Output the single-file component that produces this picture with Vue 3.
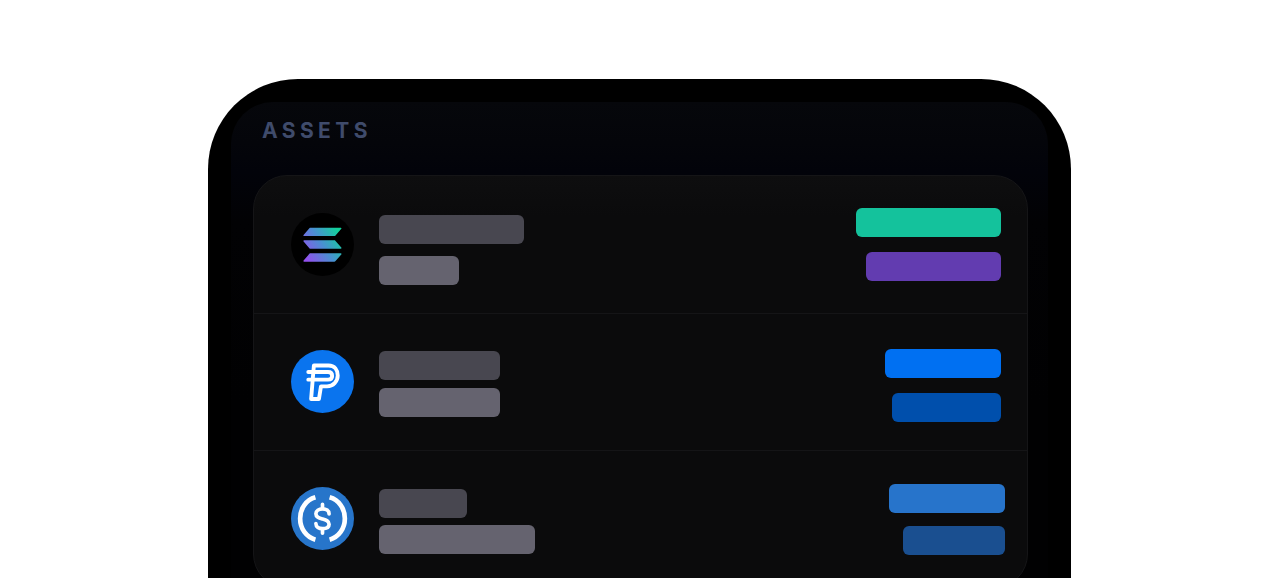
<template>
  <div class="page">
    <div class="phone">
      <section class="screen">
        <h2 class="title">ASSETS</h2>
        <ul class="card">
          <li v-for="row in rows" :key="row.id" class="row">
            <span class="icon" :style="{ marginTop: row.iconTop + 'px' }">
              <svg v-if="row.id === 'sol'" viewBox="0 0 62 62" width="63" height="63">
                <defs>
                  <linearGradient id="solGrad" gradientUnits="userSpaceOnUse" x1="380" y1="40" x2="30" y2="290">
                    <stop offset="0" stop-color="#10d39a" />
                    <stop offset="0.5" stop-color="#4a8fd2" />
                    <stop offset="1" stop-color="#9350ee" />
                  </linearGradient>
                </defs>
                <circle cx="31" cy="31" r="31" fill="#000" />
                <g transform="translate(12.200 14.400) scale(0.0943 0.1075)" fill="url(#solGrad)">
                  <path d="M64.6 237.9c2.4-2.4 5.7-3.8 9.2-3.8h317.4c5.8 0 8.7 7 4.6 11.1l-62.7 62.7c-2.4 2.4-5.7 3.8-9.2 3.8H6.5c-5.8 0-8.7-7-4.6-11.1l62.7-62.7z" />
                  <path d="M64.6 3.8C67.1 1.4 70.4 0 73.8 0h317.4c5.8 0 8.7 7 4.6 11.1l-62.7 62.7c-2.4 2.4-5.7 3.8-9.2 3.8H6.5c-5.8 0-8.7-7-4.6-11.1L64.6 3.8z" />
                  <path d="M333.1 120.1c-2.4-2.4-5.7-3.8-9.2-3.8H6.5c-5.8 0-8.7 7-4.6 11.1l62.7 62.7c2.4 2.4 5.7 3.8 9.2 3.8h317.4c5.8 0 8.7-7 4.6-11.1l-62.7-62.7z" />
                </g>
              </svg>
              <svg v-else-if="row.id === 'pyusd'" viewBox="0 0 62 62" width="63" height="63">
                <circle cx="31" cy="31" r="31" fill="#0a74ee" />
                <g fill="none" stroke="#fff" stroke-width="3.800" stroke-linejoin="round" stroke-linecap="round">
                  <path d="M22.500 15.300H37C43 15.300 46 20 46 25.200C46 31 41.500 35.800 35.500 35.800H29.500L27.500 48.200H19.800L22.500 15.300Z" />
                  <path d="M17 21.600H36.500C39 21.600 40.500 23.200 40.500 25.500C40.500 27.700 39 29.200 36.500 29.200H17" />
                </g>
              </svg>
              <svg v-else viewBox="0 0 62 62" width="63" height="63">
                <circle cx="31" cy="31" r="31" fill="#2775ca" />
                <g fill="none" stroke="#fff">
                  <path stroke-width="4.600" d="M24 10.200C15 12.800 9 21 9 31C9 41 15 49.200 24 51.800" />
                  <path stroke-width="4.600" d="M38 10.200C47 12.800 53 21 53 31C53 41 47 49.200 38 51.800" />
                  <path stroke-width="3.600" stroke-linecap="round" d="M37.500 26.500C37.500 23 34.500 21.500 31 21.500C27.500 21.500 24.500 23.300 24.500 26.300C24.500 29.700 27.500 30.500 31 31.500C34.500 32.500 37.500 33.300 37.500 36.700C37.500 39.700 34.500 41 31 41C27.500 41 24.500 39.500 24.500 36" />
                  <path stroke-width="3.600" stroke-linecap="round" d="M31 17V21M31 41.500V45.500" />
                </g>
              </svg>
            </span>
            <div class="names" :style="{ marginTop: row.leftTop + 'px', gap: row.leftGap + 'px' }">
              <span class="bar name" :style="{ width: row.name + 'px' }"></span>
              <span class="bar sub" :style="{ width: row.sub + 'px' }"></span>
            </div>
            <div class="values" :style="{ marginTop: row.rightTop + 'px', marginRight: row.rightInset + 'px', gap: row.rightGap + 'px' }">
              <span class="bar" :style="{ width: row.top[0] + 'px', background: row.top[1] }"></span>
              <span class="bar" :style="{ width: row.bottom[0] + 'px', background: row.bottom[1] }"></span>
            </div>
          </li>
        </ul>
      </section>
    </div>
  </div>
</template>

<script setup>
const rows = [
  {
    id: 'sol',
    iconTop: 37,
    leftTop: 39,
    leftGap: 12,
    name: 145,
    sub: 80,
    rightTop: 32,
    rightInset: 26,
    rightGap: 15,
    top: [145, '#14c29c'],
    bottom: [135, '#623cb0'],
  },
  {
    id: 'pyusd',
    iconTop: 36,
    leftTop: 37,
    leftGap: 8,
    name: 121,
    sub: 121,
    rightTop: 35,
    rightInset: 26,
    rightGap: 15,
    top: [116, '#0070f2'],
    bottom: [109, '#004fac'],
  },
  {
    id: 'usdc',
    iconTop: 36,
    leftTop: 38,
    leftGap: 7,
    name: 88,
    sub: 156,
    rightTop: 33,
    rightInset: 22,
    rightGap: 13,
    top: [116, '#2774cb'],
    bottom: [102, '#1a4f90'],
  },
]
</script>

<style>
html,
body {
  margin: 0;
  background: #fff;
  overflow: hidden;
}
</style>

<style scoped>
.page {
  height: 578px;
  overflow: hidden;
  padding: 79px 0 0 208px;
  box-sizing: border-box;
  background: #fff;
}

.phone {
  width: 863px;
  height: 600px;
  padding: 23px 23px 0;
  box-sizing: border-box;
  background: #000;
  border-radius: 90px 90px 0 0;
}

.screen {
  height: 577px;
  padding: 0 20px 0 22px;
  border-radius: 42px 42px 0 0;
  background: linear-gradient(180deg, #06070b 0, #04050a 40px, #02030a 70px, #020204 120px, #010102 300px);
}

.title {
  margin: 0;
  height: 73px;
  padding: 16px 0 0 9px;
  box-sizing: border-box;
  font-family: Inter, "Liberation Sans", sans-serif;
  font-size: 21px;
  line-height: 25px;
  font-weight: 700;
  letter-spacing: 4.400px;
  color: #3f4b6b;
}

.card {
  list-style: none;
  margin: 0;
  padding: 0;
  border: 1px solid #151517;
  border-radius: 34px;
  background: linear-gradient(180deg, #0e0e0f 0, #0b0b0c 40px);
  overflow: hidden;
}

.row {
  display: flex;
  align-items: flex-start;
  height: 137px;
  padding-left: 37px;
  box-sizing: border-box;
}

.row + .row {
  border-top: 1px solid #151517;
}

.icon {
  display: block;
  width: 63px;
  height: 63px;
  flex: none;
  margin-right: 25px;
}

.icon svg {
  display: block;
}

.names,
.values {
  display: flex;
  flex-direction: column;
}

.values {
  margin-left: auto;
  align-items: flex-end;
}

.bar {
  display: block;
  height: 29px;
  border-radius: 6px;
}

.name {
  background: #484750;
}

.sub {
  background: #65636f;
}
</style>
